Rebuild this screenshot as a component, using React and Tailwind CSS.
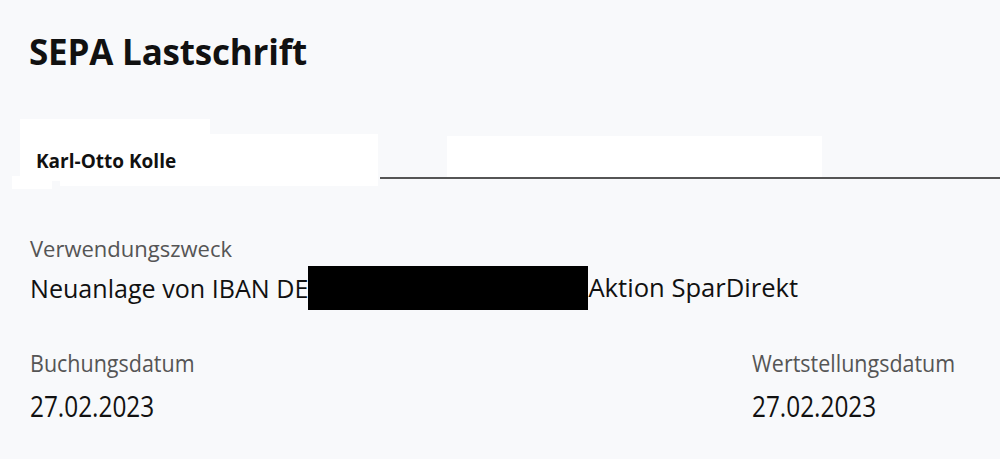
import React from 'react';

const font = { fontFamily: '"Open Sans", "Noto Sans", sans-serif' };

function DateField({ label, value }) {
  return (
    <div className="flex flex-col">
      <div className="text-[24px] text-[#555] leading-[30px] scale-x-[0.895] origin-left whitespace-nowrap">{label}</div>
      <div className="text-[29px] leading-[36px] mt-[10px] scale-x-[0.84] origin-left whitespace-nowrap">{value}</div>
    </div>
  );
}

export default function App() {
  return (
    <div className="relative w-[1000px] h-[459px] bg-[#f8f9fb] overflow-hidden text-[#111]" style={font}>
      {/* Header */}
      <div className="pt-[28px] pl-[29px]">
        <h1 className="text-[35px] font-bold leading-[48px] tracking-[-0.2px]">SEPA Lastschrift</h1>
      </div>

      {/* Tabs */}
      <div className="relative mt-[43px] h-[70px]">
        <div className="absolute left-[20px] top-0 w-[190px] h-[62px] bg-white" />
        <div className="absolute left-[60px] top-[15px] w-[318px] h-[52px] bg-white" />
        <div className="absolute left-[12px] top-[57px] w-[40px] h-[13px] bg-white" />
        <div className="absolute left-[447px] top-[17px] w-[375px] h-[41px] bg-white" />
        <div className="absolute left-[380px] right-0 top-[58px] h-[2px] bg-[#555]" />
        <div className="relative flex pl-[36px] pt-[29px]">
          <span className="text-[19px] font-bold leading-[26px]">Karl-Otto Kolle</span>
        </div>
      </div>

      {/* Details */}
      <div className="flex flex-col pl-[30px] pt-[44px] pr-[41px]">
        <div className="text-[22px] text-[#555] leading-[30px] whitespace-nowrap">Verwendungszweck</div>
        <div className="flex items-center leading-[44px] mt-[3px] whitespace-nowrap">
          <span className="text-[25.1px]">Neuanlage von IBAN DE</span>
          <span className="inline-block w-[280px] h-[44px] bg-black" />
          <span className="text-[25.6px]">Aktion SparDirekt</span>
        </div>

        <div className="grid grid-cols-[722px_1fr] mt-[38px]">
          <DateField label="Buchungsdatum" value="27.02.2023" />
          <DateField label="Wertstellungsdatum" value="27.02.2023" />
        </div>
      </div>
    </div>
  );
}
